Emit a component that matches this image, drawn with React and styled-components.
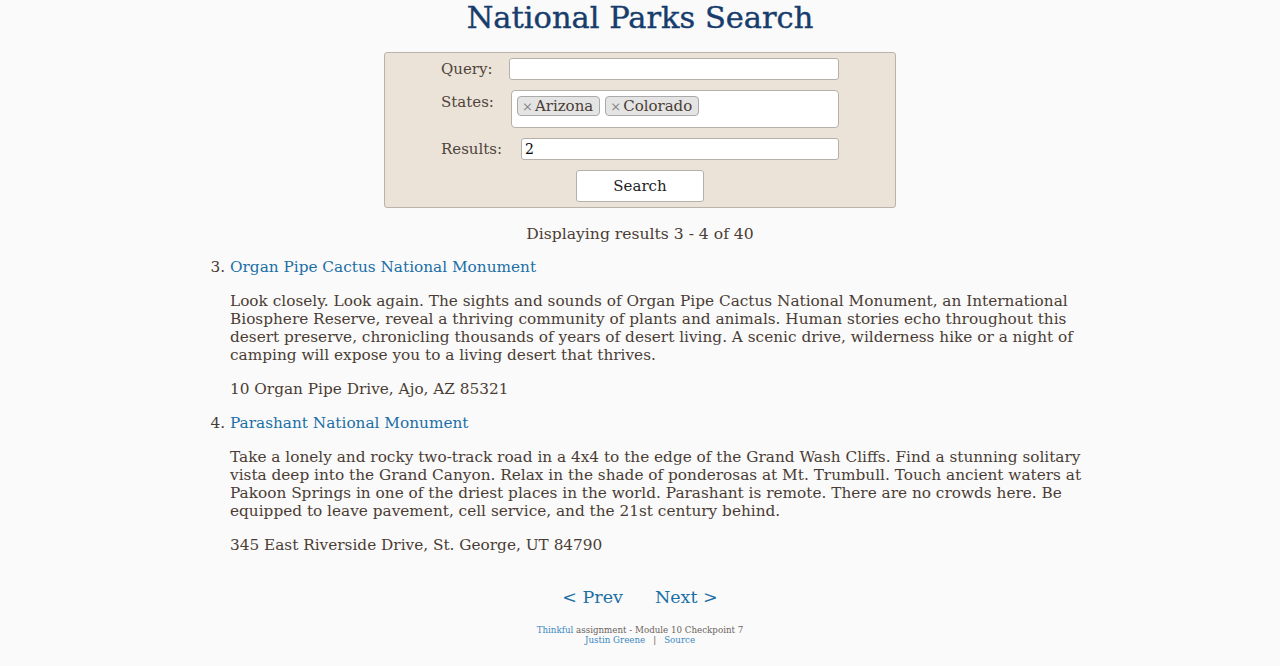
import React from "react"
import styled, { createGlobalStyle } from "styled-components"

const GlobalStyle = createGlobalStyle`
  body {
    margin: 0;
    background: #fafafa;
    font-family: "DejaVu Serif", "Liberation Serif", serif;
    color: #4a3d35;
  }
`

const results = [
  {
    n: 3,
    name: "Organ Pipe Cactus National Monument",
    text:
      "Look closely. Look again. The sights and sounds of Organ Pipe Cactus National Monument, an International Biosphere Reserve, reveal a thriving community of plants and animals. Human stories echo throughout this desert preserve, chronicling thousands of years of desert living. A scenic drive, wilderness hike or a night of camping will expose you to a living desert that thrives.",
    address: "10 Organ Pipe Drive, Ajo, AZ 85321",
  },
  {
    n: 4,
    name: "Parashant National Monument",
    text:
      "Take a lonely and rocky two-track road in a 4x4 to the edge of the Grand Wash Cliffs. Find a stunning solitary vista deep into the Grand Canyon. Relax in the shade of ponderosas at Mt. Trumbull. Touch ancient waters at Pakoon Springs in one of the driest places in the world. Parashant is remote. There are no crowds here. Be equipped to leave pavement, cell service, and the 21st century behind.",
    address: "345 East Riverside Drive, St. George, UT 84790",
  },
]

const App = () => (
  <Page>
    <GlobalStyle />
    <Title>National Parks Search</Title>
    <SearchForm>
      <Row>
        <Label>Query:</Label>
        <TextInput defaultValue="" />
      </Row>
      <Row $top>
        <Label $offset>States:</Label>
        <MultiSelect>
          <Tag><X>×</X>Arizona</Tag>
          <Tag><X>×</X>Colorado</Tag>
        </MultiSelect>
      </Row>
      <Row>
        <Label $wide>Results:</Label>
        <TextInput defaultValue="2" />
      </Row>
      <ButtonRow>
        <SearchButton type="button">Search</SearchButton>
      </ButtonRow>
    </SearchForm>

    <Summary>Displaying results 3 - 4 of 40</Summary>

    <ResultList start={3}>
      {results.map((r) => (
        <Item key={r.n}>
          <ParkLink href="#">{r.name}</ParkLink>
          <Para>{r.text}</Para>
          <Para>{r.address}</Para>
        </Item>
      ))}
    </ResultList>

    <Pager>
      <PagerLink href="#">&lt; Prev</PagerLink>
      <PagerLink href="#">Next &gt;</PagerLink>
    </Pager>

    <Footer>
      <div>
        <FootLink href="#">Thinkful</FootLink> assignment - Module 10 Checkpoint 7
      </div>
      <div>
        <FootLink href="#">Justin Greene</FootLink>
        <Sep>|</Sep>
        <FootLink href="#">Source</FootLink>
      </div>
    </Footer>
  </Page>
)

export default App

const Page = styled.div`
  width: 900px;
  margin: 0 auto;
  display: flex;
  flex-direction: column;
  align-items: center;
`

const Title = styled.h1`
  margin: 0 0 16px;
  font-size: 30.5px;
  line-height: 36px;
  font-weight: 400;
  color: #173d6c;
  -webkit-text-stroke: 0.4px #173d6c;
`

const SearchForm = styled.form`
  box-sizing: border-box;
  width: 512px;
  padding: 5px 56px 5px;
  background: #ebe3d8;
  border: 1px solid #b9b3ac;
  border-radius: 3px;
  display: flex;
  flex-direction: column;
  gap: 10px;
`

const Row = styled.div`
  display: flex;
  align-items: ${(p) => (p.$top ? "flex-start" : "center")};
  gap: 16px;
`

const Label = styled.label`
  font-size: 15px;
  color: #4f433b;
  width: ${(p) => (p.$wide ? "64px" : "52px")};
  flex-shrink: 0;
  padding-top: ${(p) => (p.$offset ? "3px" : "0")};
`

const TextInput = styled.input`
  flex: 1;
  height: 22px;
  box-sizing: border-box;
  border: 1px solid #b5b0aa;
  border-radius: 3px;
  background: #fff;
  font-family: "DejaVu Serif", serif;
  font-size: 14px;
  padding: 0 3px;
  color: #000;
`

const MultiSelect = styled.div`
  flex: 1;
  margin-left: 2px;
  height: 38px;
  box-sizing: border-box;
  border: 1px solid #b5b0aa;
  border-radius: 4px;
  background: #fff;
  display: flex;
  align-items: flex-start;
  gap: 5px;
  padding: 5px 5px;
`

const Tag = styled.span`
  display: inline-flex;
  align-items: center;
  height: 20px;
  box-sizing: border-box;
  padding: 0 6px 0 4px;
  background: #e4e4e4;
  border: 1px solid #aaa;
  border-radius: 4px;
  font-size: 15px;
  color: #4a3d35;
`

const X = styled.span`
  color: #888;
  font-size: 13px;
  margin-right: 2px;
`

const ButtonRow = styled.div`
  display: flex;
  justify-content: center;
`

const SearchButton = styled.button`
  width: 128px;
  height: 32px;
  background: #fff;
  border: 1px solid #b5b0aa;
  border-radius: 3px;
  font-family: "DejaVu Serif", serif;
  font-size: 15px;
  color: #222;
`

const Summary = styled.div`
  margin-top: 16px;
  font-size: 15.6px;
  line-height: 20px;
`

const ResultList = styled.ol`
  align-self: stretch;
  margin: 14px 0 0;
  padding-left: 40px;
  font-size: 15.3px;
  line-height: 18px;
`

const Item = styled.li`
  margin-bottom: 16px;
`

const ParkLink = styled.a`
  color: #1b6fa6;
  text-decoration: none;
  display: block;
  margin-bottom: 16px;
`

const Para = styled.p`
  margin: 0 0 16px;
`

const Pager = styled.div`
  margin-top: 17px;
  display: flex;
  gap: 32px;
`

const PagerLink = styled.a`
  color: #1b6fa6;
  text-decoration: none;
  font-size: 17.5px;
`

const Footer = styled.footer`
  margin-top: 18px;
  text-align: center;
  font-size: 8.7px;
  line-height: 10px;
  color: #6a625c;
`

const FootLink = styled.a`
  color: #3d88bd;
  text-decoration: none;
`

const Sep = styled.span`
  margin: 0 8px;
`
